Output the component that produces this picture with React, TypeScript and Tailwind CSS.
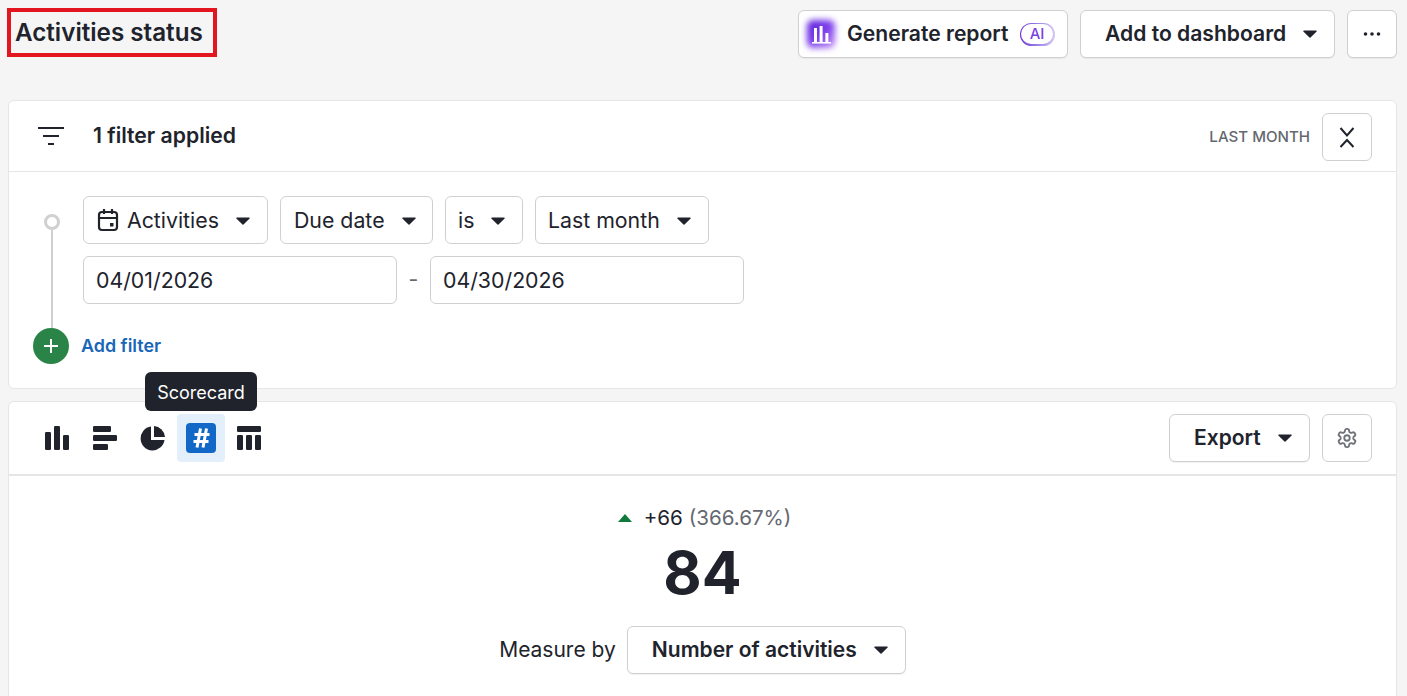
import React from "react";

const Caret = ({ className = "" }: { className?: string }) => (
  <svg width="14" height="8" viewBox="0 0 14 8" className={"shrink-0 " + className}>
    <path d="M0.8 0.6h12.4a.6.6 0 0 1 .45 1L7.5 7.4a.7.7 0 0 1-1 0L.35 1.6a.6.6 0 0 1 .45-1z" fill="#21232c" />
  </svg>
);

const Select = ({ children, className = "" }: { children: React.ReactNode; className?: string }) => (
  <div className={"h-12 pt-[2px] flex items-center border border-[#cfd0d2] rounded-[6px] bg-white text-[21.3px] text-[#21232c] " + className}>
    {children}
  </div>
);

const Btn = ({ children, className = "" }: { children: React.ReactNode; className?: string }) => (
  <div className={"h-12 flex items-center border border-[#cfd0d2] rounded-[6px] bg-white text-[21px] font-semibold text-[#21232c] shadow-[0_1px_1px_rgba(0,0,0,0.06)] " + className}>
    {children}
  </div>
);

export default function App() {
  return (
    <div className="w-[1407px] h-[696px] overflow-hidden bg-[#f5f5f5] font-['Inter',sans-serif] text-[#21232c] pl-2 pr-[10px]">
      <header className="h-[100px] flex items-start justify-between">
        <div className="mt-2 -ml-px h-[49px] w-[210px] border-[4.5px] border-[#e3151f] flex items-center pl-[4px]">
          <h1 className="mt-[2px] text-[24.2px] leading-none font-semibold whitespace-nowrap">Activities status</h1>
        </div>
        <div className="mt-[10px] flex gap-3">
          <Btn className="w-[270px] pl-[6px] gap-[10px]">
            <div className="relative w-8 h-8 flex items-center justify-center">
              <div className="absolute left-[2px] top-[2px] w-7 h-7 rounded-[6px] bg-gradient-to-br from-[#5b1fd6] via-[#7c3aed] to-[#c98bf0] blur-[3px]" />
              <svg width="24" height="24" viewBox="0 0 24 24" fill="#fff" className="relative">
                <rect x="5" y="6" width="3" height="15" />
                <rect x="10.6" y="4" width="3" height="17" />
                <rect x="16.4" y="11" width="3" height="10" />
                <rect x="3" y="20" width="19" height="1.6" />
              </svg>
            </div>
            <span className="whitespace-nowrap text-[21.1px]">Generate report</span>
            <span className="h-[23px] w-[35px] rounded-full bg-gradient-to-r from-[#6d28d9] to-[#d6c7f5] p-[1.5px] ml-px">
              <span className="w-full h-full rounded-full bg-white text-[#7c3fe4] text-[15px] font-medium flex items-center justify-center">AI</span>
            </span>
          </Btn>
          <Btn className="w-[255px] pl-6 gap-[17px]">
            <span className="whitespace-nowrap text-[21.1px]">Add to dashboard</span>
            <Caret />
          </Btn>
          <Btn className="w-[50px] justify-center">
            <svg width="18" height="4" viewBox="0 0 18 4" fill="#21232c">
              <circle cx="2.5" cy="2" r="1.8" />
              <circle cx="9" cy="2" r="1.8" />
              <circle cx="15.5" cy="2" r="1.8" />
            </svg>
          </Btn>
        </div>
      </header>

      <section className="h-[289px] bg-white border border-[#e6e6e7] rounded-[6px]">
        <div className="h-[71px] border-b border-[#e6e6e7] flex items-center pl-7 pr-6">
          <svg width="28" height="20" viewBox="0 0 28 20" stroke="#21232c" strokeWidth="2.2" className="shrink-0">
            <path d="M1 2h26M6 10h16M11 18h6" />
          </svg>
          <span className="ml-7 text-[21.2px] font-semibold whitespace-nowrap">1 filter applied</span>
          <span className="ml-auto text-[15.1px] font-medium text-[#65686f] whitespace-nowrap mt-[2px]">LAST MONTH</span>
          <div className="ml-3 mt-[2px] w-[50px] h-12 border border-[#cfd0d2] rounded-[6px] flex items-center justify-center">
            <svg width="16" height="21" viewBox="0 0 16 21" fill="none" stroke="#21232c" strokeWidth="2">
              <path d="M1.5 1l6.5 7.5L14.5 1M1.5 20l6.5-7 6.5 7" />
            </svg>
          </div>
        </div>
        <div className="relative pt-6 pl-[74px]">
          <div className="absolute left-[35px] top-[42px] w-4 h-4 rounded-full border-[3px] border-[#cfd0d2] bg-white" />
          <div className="absolute left-[42px] top-[58px] w-[2px] h-[100px] bg-[#cfd0d2]" />
          <div className="flex gap-3">
            <Select className="w-[185px] pl-[13px] gap-[17px]">
              <span className="flex items-center gap-2">
                <svg width="22" height="24" viewBox="0 0 22 24" fill="none" stroke="#21232c" strokeWidth="2.2" className="shrink-0 -mt-[2px]">
                  <rect x="2" y="4" width="18" height="18" rx="3" />
                  <path d="M2 10h18M7 1v5M15 1v5" />
                  <rect x="13" y="15" width="3.5" height="3.5" fill="#21232c" strokeWidth="0" />
                </svg>
                Activities
              </span>
              <Caret />
            </Select>
            <Select className="w-[153px] pl-[13px] gap-[17px]">
              <span className="whitespace-nowrap">Due date</span>
              <Caret />
            </Select>
            <Select className="w-[78px] pl-3 gap-[17px]">
              <span>is</span>
              <Caret />
            </Select>
            <Select className="w-[174px] pl-3 gap-[17px]">
              <span className="whitespace-nowrap">Last month</span>
              <Caret />
            </Select>
          </div>
          <div className="flex items-center mt-3">
            <Select className="w-[314px] pl-3">04/01/2026</Select>
            <span className="w-[33px] text-center text-[21.3px] text-[#65686f]">-</span>
            <Select className="w-[314px] pl-3">04/30/2026</Select>
          </div>
          <div className="absolute left-6 top-[156px] flex items-center gap-3">
            <div className="w-9 h-9 rounded-full bg-[#2a8447] flex items-center justify-center">
              <svg width="16" height="16" viewBox="0 0 16 16" stroke="#fff" strokeWidth="2">
                <path d="M8 1v14M1 8h14" />
              </svg>
            </div>
            <span className="text-[17.9px] font-semibold text-[#1a66b8] whitespace-nowrap">Add filter</span>
          </div>
        </div>
      </section>

      <section className="relative mt-3 h-[320px] bg-white border border-[#e6e6e7] rounded-[6px]">
        <div className="absolute left-[136px] -top-[30px] h-[39px] w-[112px] pt-[2px] bg-[#21232c] rounded-[6px] text-white text-[18px] flex items-center justify-center">
          Scorecard
        </div>
        <div className="h-[74px] border-b-2 border-[#e6e6e7] flex items-center pl-6 pr-6 pb-px">
          <div className="w-12 h-12 flex items-center justify-center">
            <svg width="24" height="24" viewBox="0 0 24 24" fill="#21232c">
              <rect x="0" y="6" width="6" height="18" rx="1.2" />
              <rect x="9" y="0" width="6" height="24" rx="1.2" />
              <rect x="18" y="9" width="6" height="15" rx="1.2" />
            </svg>
          </div>
          <div className="w-12 h-12 flex items-center justify-center">
            <svg width="24" height="24" viewBox="0 0 24 24" fill="#21232c">
              <rect x="0" y="0" width="18" height="6" rx="1.2" />
              <rect x="0" y="9" width="24" height="6" rx="1.2" />
              <rect x="0" y="18" width="15" height="6" rx="1.2" />
            </svg>
          </div>
          <div className="w-12 h-12 flex items-center justify-center">
            <svg width="26" height="26" viewBox="0 0 26 26" fill="#21232c">
              <path d="M11 1.5V15h13.5A12 12 0 1 1 11 1.5z" />
              <path d="M14 1a12 12 0 0 1 11 11H14z" />
            </svg>
          </div>
          <div className="w-12 h-12 rounded-[4px] bg-[#e3f0fc] flex items-center justify-center">
            <div className="w-[30px] h-[30px] rounded-[4px] bg-[#1268c6] flex items-center justify-center">
              <svg width="17" height="20" viewBox="0 0 17 20" fill="none" stroke="#fff" strokeWidth="3">
                <path d="M7.5 0.5L4 19.5M13.5 0.5L10 19.5M1.5 6.5H16.5M0.5 13.5H15.5" />
              </svg>
            </div>
          </div>
          <div className="w-12 h-12 flex items-center justify-center">
            <svg width="24" height="24" viewBox="0 0 24 24" fill="#21232c">
              <rect x="0" y="0" width="24" height="6" rx="1.2" />
              <rect x="0" y="9" width="6" height="15" rx="1.2" />
              <rect x="9" y="9" width="6" height="15" rx="1.2" />
              <rect x="18" y="9" width="6" height="15" rx="1.2" />
            </svg>
          </div>
          <Btn className="ml-auto w-[141px] pl-6 gap-[17px]">
            <span>Export</span>
            <Caret />
          </Btn>
          <div className="ml-3 w-[50px] h-12 border border-[#cfd0d2] rounded-[6px] flex items-center justify-center">
            <svg width="22" height="22" viewBox="0 0 24 24" fill="none" stroke="#6f7278" strokeWidth="2" strokeLinecap="round" strokeLinejoin="round">
              <path d="M12.22 2h-.44a2 2 0 0 0-2 2v.18a2 2 0 0 1-1 1.73l-.43.25a2 2 0 0 1-2 0l-.15-.08a2 2 0 0 0-2.73.73l-.22.38a2 2 0 0 0 .73 2.73l.15.1a2 2 0 0 1 1 1.72v.51a2 2 0 0 1-1 1.74l-.15.09a2 2 0 0 0-.73 2.73l.22.38a2 2 0 0 0 2.73.73l.15-.08a2 2 0 0 1 2 0l.43.25a2 2 0 0 1 1 1.73V20a2 2 0 0 0 2 2h.44a2 2 0 0 0 2-2v-.18a2 2 0 0 1 1-1.73l.43-.25a2 2 0 0 1 2 0l.15.08a2 2 0 0 0 2.73-.73l.22-.39a2 2 0 0 0-.73-2.73l-.15-.08a2 2 0 0 1-1-1.74v-.5a2 2 0 0 1 1-1.74l.15-.09a2 2 0 0 0 .73-2.73l-.22-.38a2 2 0 0 0-2.73-.73l-.15.08a2 2 0 0 1-2 0l-.43-.25a2 2 0 0 1-1-1.73V4a2 2 0 0 0-2-2z" />
              <circle cx="12" cy="12" r="3" />
            </svg>
          </div>
        </div>
        <div className="flex flex-col items-center pt-[30px]">
          <div className="h-6 flex items-center gap-3 text-[20.6px] leading-none pl-1">
            <svg width="14" height="8" viewBox="0 0 14 8" fill="#0f7a3c"><path d="M7 0l7 8H0z" /></svg>
            <span className="whitespace-nowrap">+66 <span className="text-[#65686f]">(366.67%)</span></span>
          </div>
          <div className="mt-[10px] h-[64px] flex items-center text-[59px] leading-none font-bold">84</div>
          <div className="mt-[22px] flex items-center gap-[11px]">
            <span className="text-[21px] whitespace-nowrap">Measure by</span>
            <Btn className="w-[279px] pl-6 gap-[17px]">
              <span className="whitespace-nowrap">Number of activities</span>
              <Caret />
            </Btn>
          </div>
        </div>
      </section>
    </div>
  );
}
